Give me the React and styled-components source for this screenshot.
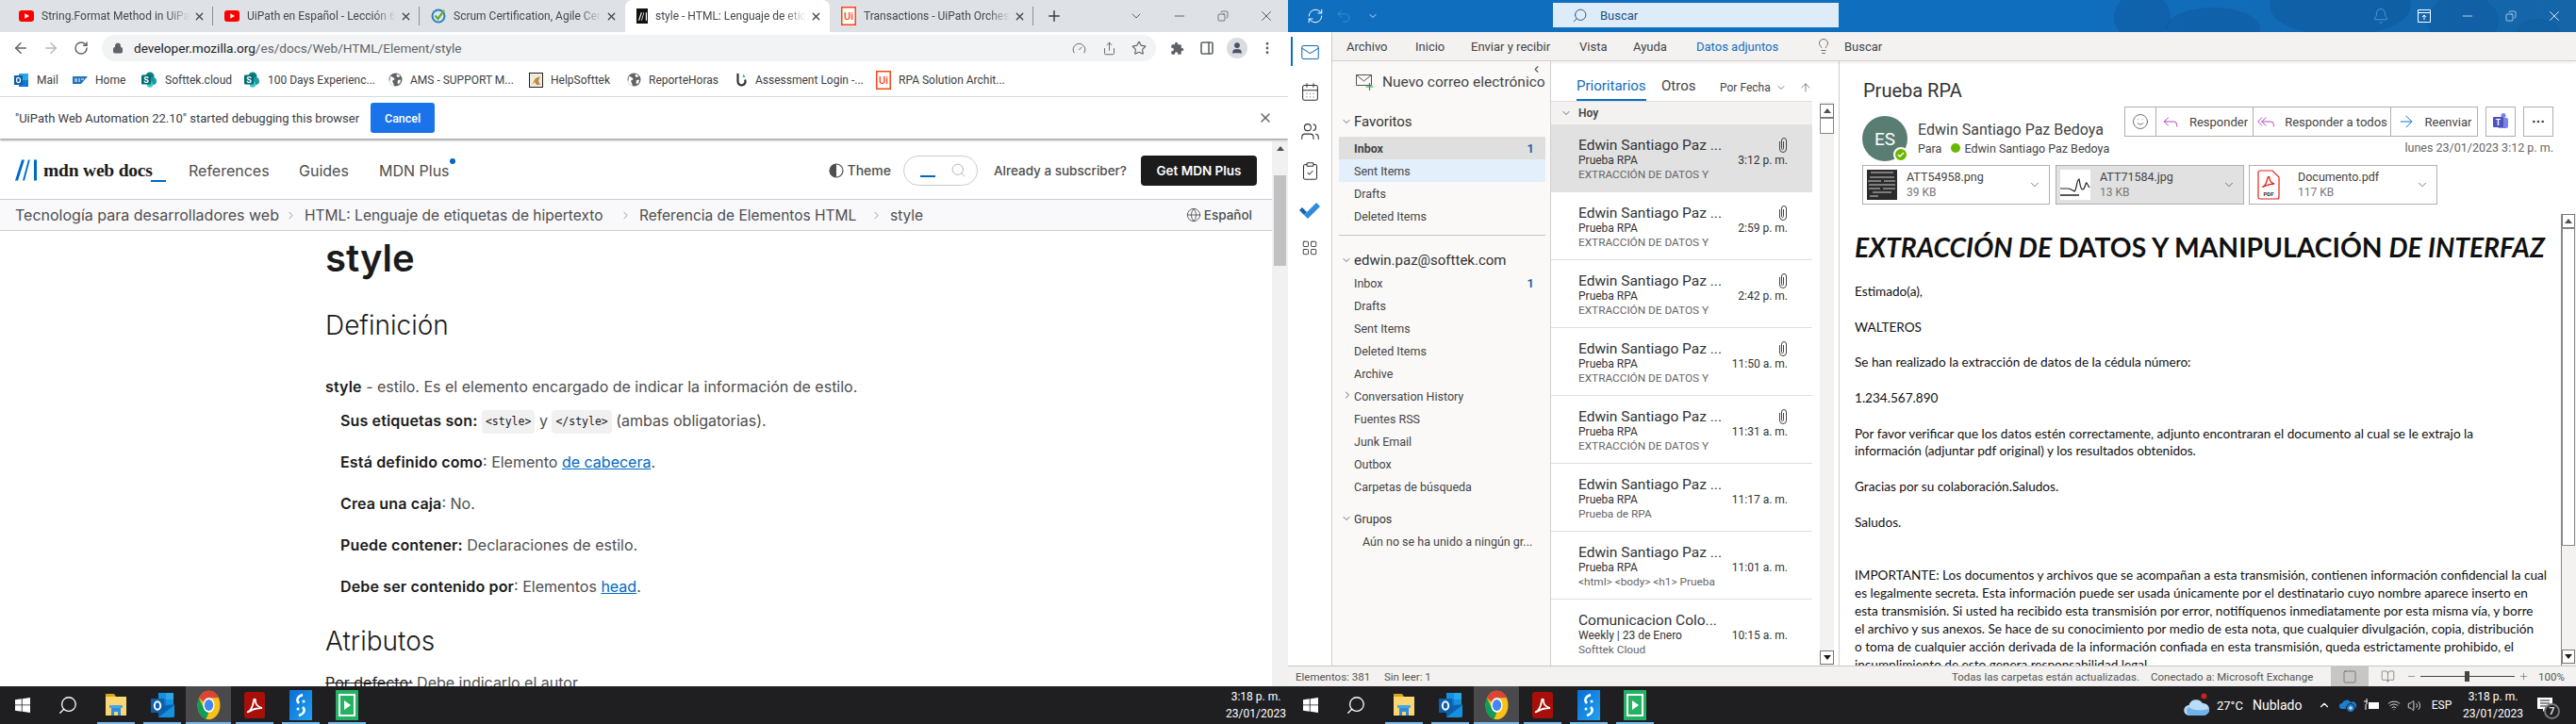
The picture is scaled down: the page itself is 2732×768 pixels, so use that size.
import React from "react";
import styled, { createGlobalStyle } from "styled-components";
import {
  ArrowLeft, ArrowRight, ArrowUp, BookOpen, ChevronDown, ChevronLeft, ChevronRight, ChevronUp,
  Copy, Globe, Lightbulb, Lock, Mail, Minus, MoreHorizontal, MoreVertical, Plus, Reply, ReplyAll,
  RotateCw, Search, Share, Smile, Square, Star, Volume2, Wifi, X, Bell, RefreshCw, Undo2, Users,
  ClipboardCheck, CalendarDays, LayoutGrid, Gauge, PanelRight, User,
} from "lucide-react";

const GlobalStyle = createGlobalStyle`
  html, body { margin: 0; padding: 0; background: #fff; overflow: hidden; }
  * { box-sizing: border-box; }
`;

const UI = `Roboto, "Open Sans", sans-serif`;
const MAIL = `Lato, "Open Sans", sans-serif`;
const MDN = `Inter, Roboto, sans-serif`;

const Screen = styled.div`
  display: flex;
  width: 2732px;
  height: 768px;
  overflow: hidden;
  font-family: ${UI};
`;

const Monitor = styled.div`
  width: 1366px;
  height: 768px;
  display: flex;
  flex-direction: column;
  flex: none;
`;

const Window = styled.div`
  flex: 1;
  min-height: 0;
  display: flex;
  flex-direction: column;
  overflow: hidden;
  background: #fff;
`;

/* ---------- Chrome ---------- */

const TabStrip = styled.div`
  height: 34px;
  flex: none;
  display: flex;
  align-items: stretch;
  padding-left: 8px;
  background: #dee1e6;
`;

const Tab = styled.div`
  width: ${(p) => p.$w}px;
  display: flex;
  align-items: center;
  padding: 0 8px 0 12px;
  position: relative;
  font-size: 12px;
  color: #44474c;
  background: ${(p) => (p.$active ? "#fff" : "transparent")};
  border-radius: ${(p) => (p.$active ? "8px 8px 0 0" : "0")};
  &::after {
    content: "";
    display: ${(p) => (p.$sep ? "block" : "none")};
    position: absolute;
    right: 0;
    top: 7px;
    bottom: 7px;
    width: 1px;
    background: #8c9095;
  }
`;

const TabTitle = styled.span`
  flex: 1;
  min-width: 0;
  margin: 0 4px 0 8px;
  white-space: nowrap;
  overflow: hidden;
  -webkit-mask-image: linear-gradient(90deg, #000 85%, transparent);
  mask-image: linear-gradient(90deg, #000 85%, transparent);
`;

const NewTab = styled.div`
  width: 28px;
  margin-left: 8px;
  display: flex;
  align-items: center;
  justify-content: center;
  color: #3c4043;
`;

const WinControls = styled.div`
  margin-left: auto;
  display: flex;
`;

const WinButton = styled.div`
  width: 46px;
  display: flex;
  align-items: center;
  justify-content: center;
  color: ${(p) => p.$color || "#3c4043"};
`;

const Toolbar = styled.div`
  height: 34px;
  flex: none;
  display: flex;
  align-items: center;
  padding-left: 6px;
  color: #5f6368;
`;

const ToolButton = styled.div`
  width: 32px;
  height: 28px;
  display: flex;
  align-items: center;
  justify-content: center;
  color: ${(p) => p.$color || "#5f6368"};
`;

const Omnibox = styled.div`
  width: 1118px;
  height: 28px;
  margin: 0 6px;
  padding: 0 2px 0 11px;
  display: flex;
  align-items: center;
  border-radius: 14px;
  background: #f1f3f4;
`;

const Url = styled.div`
  flex: 1;
  margin-left: 11px;
  font-size: 13.6px;
  color: #5f6368;
  b { font-weight: 400; color: #202124; }
`;

const Avatar = styled.div`
  width: 22px;
  height: 22px;
  border-radius: 50%;
  background: #dadce0;
  color: #44546a;
  display: flex;
  align-items: center;
  justify-content: center;
`;

const Bookmarks = styled.div`
  height: 35px;
  flex: none;
  display: flex;
  align-items: center;
  padding: 0 0 1px 15px;
  border-bottom: 1px solid #d8dadd;
`;

const Bookmark = styled.div`
  width: ${(p) => p.$w}px;
  flex: none;
  display: flex;
  align-items: center;
  gap: 8px;
  font-size: 12px;
  color: #3c4043;
  white-space: nowrap;
`;

const Infobar = styled.div`
  height: 44px;
  flex: none;
  display: flex;
  align-items: center;
  padding: 0 16px;
  font-size: 13px;
  color: #3c4043;
  box-shadow: 0 2px 2px rgba(0, 0, 0, 0.35);
  position: relative;
`;

const CancelButton = styled.div`
  width: 68px;
  height: 32px;
  margin-left: 12px;
  display: flex;
  align-items: center;
  justify-content: center;
  border-radius: 3px;
  background: #1a73e8;
  color: #fff;
  font-size: 12.5px;
  font-weight: 500;
`;

const InfoClose = styled.div`
  margin-left: auto;
  display: flex;
  color: #5f6368;
`;

const PageArea = styled.div`
  flex: 1;
  min-height: 0;
  display: flex;
  margin-top: 3px;
`;

const MdnPage = styled.div`
  flex: 1;
  min-width: 0;
  overflow: hidden;
  font-family: ${MDN};
  color: #1b1b1b;
`;

const MdnHeader = styled.div`
  height: 62px;
  display: flex;
  align-items: center;
  padding: 0 16px;
  border-bottom: 1px solid #cdcdcd;
`;

const LogoText = styled.span`
  width: 112px;
  flex: none;
  margin-left: 7px;
  font-family: "Liberation Serif", serif;
  font-weight: 700;
  font-size: 19.5px;
  letter-spacing: -0.2px;
  color: #1b1b1b;
  white-space: nowrap;
`;

const LogoCursor = styled.span`
  width: 16px;
  height: 2px;
  margin: 22px 0 0 2px;
  background: #0069c2;
  flex: none;
`;

const NavLink = styled.span`
  width: ${(p) => p.$w}px;
  flex: none;
  font-size: 16px;
  font-weight: 400;
  color: #4e4e4e;
  margin-left: ${(p) => p.$ml || 0}px;
  position: relative;
  white-space: nowrap;
`;

const PlusDot = styled.i`
  position: absolute;
  left: 75px;
  top: -3px;
  width: 6px;
  height: 6px;
  border-radius: 50%;
  background: #0069c2;
`;

const HeaderRight = styled.div`
  margin-left: auto;
  display: flex;
  align-items: center;
`;

const ThemeToggle = styled.div`
  display: flex;
  align-items: center;
  gap: 4px;
  font-size: 14px;
  font-weight: 500;
  color: #4e4e4e;
`;

const SearchPill = styled.div`
  width: 79px;
  height: 32px;
  margin-left: 13px;
  padding: 0 11px 0 17px;
  display: flex;
  align-items: center;
  justify-content: space-between;
  border: 1px solid #cdcdcd;
  border-radius: 16px;
  color: #b3b3b3;
`;

const SearchCursor = styled.span`
  width: 16px;
  height: 2px;
  margin-top: 12px;
  background: #0069c2;
`;

const Subscriber = styled.span`
  width: 140px;
  margin-left: 17px;
  font-size: 13.5px;
  font-weight: 500;
  color: #4e4e4e;
  white-space: nowrap;
`;

const PlusButton = styled.div`
  width: 123px;
  height: 32px;
  margin-left: 16px;
  display: flex;
  align-items: center;
  justify-content: center;
  border-radius: 4px;
  background: #1b1b1b;
  color: #fff;
  font-size: 13.5px;
  font-weight: 600;
`;

const Breadcrumb = styled.div`
  height: 33px;
  display: flex;
  align-items: center;
  padding: 0 21px 0 16px;
  background: #f9f9fb;
  border-bottom: 1px solid #cdcdcd;
  font-size: 15.5px;
  font-weight: 400;
  color: #4e4e4e;
  white-space: nowrap;
`;

const Crumb = styled.span`
  width: ${(p) => p.$w}px;
  flex: none;
  display: flex;
  align-items: center;
  justify-content: space-between;
  padding-right: 8px;
  font-size: ${(p) => p.$size || 15.5}px;
  color: #4e4e4e;
`;

const LangPick = styled.div`
  margin-left: auto;
  display: flex;
  align-items: center;
  gap: 3px;
  font-size: 13.5px;
  font-weight: 500;
`;

const Article = styled.div`
  padding: 5px 0 0 345px;
`;

const H1 = styled.h1`
  margin: 0;
  font-size: 40px;
  line-height: 48px;
  font-weight: 600;
  color: #1b1b1b;
`;

const H2 = styled.h2`
  margin: ${(p) => p.$mt}px 0 0;
  font-size: 28px;
  line-height: 36px;
  font-weight: 300;
  color: #1b1b1b;
`;

const Para = styled.p`
  height: 24px;
  margin: ${(p) => p.$mt}px 0 0 ${(p) => p.$indent || 0}px;
  font-size: 16px;
  line-height: 24px;
  font-weight: 400;
  color: #4e4e4e;
  white-space: nowrap;
  strong { font-weight: 600; color: #1b1b1b; letter-spacing: 0.15px; }
  a { color: #0069c2; text-decoration: underline; }
  s { color: #1b1b1b; }
`;

const Code = styled.code`
  display: inline-block;
  padding: 0 4px;
  height: 25px;
  line-height: 25px;
  vertical-align: middle;
  font-family: "DejaVu Sans Mono", "Liberation Mono", monospace;
  font-size: 11.5px;
  border-radius: 4px;
  background: #f2f1f1;
  color: #1b1b1b;
`;

const PageScroll = styled.div`
  width: 17px;
  flex: none;
  display: flex;
  flex-direction: column;
  align-items: center;
  background: #f1f1f1;
`;

const ScrollThumb = styled.div`
  width: 13px;
  height: 96px;
  margin-top: 26px;
  background: #c1c1c1;
`;

const Triangle = styled.i`
  width: 0;
  height: 0;
  margin-top: ${(p) => p.$mt || 0}px;
  border-left: 4px solid transparent;
  border-right: 4px solid transparent;
  ${(p) => (p.$down ? "border-top: 5px solid #1b1b1b;" : "border-bottom: 5px solid #505050;")}
`;

/* ---------- Taskbar ---------- */

const Taskbar = styled.div`
  height: 40px;
  flex: none;
  display: flex;
  align-items: stretch;
  background: #1f1f22;
  color: #fff;
`;

const TaskSlot = styled.div`
  width: 48px;
  flex: none;
  margin-right: ${(p) => p.$mr ?? 1}px;
  display: flex;
  align-items: center;
  justify-content: center;
  position: relative;
  background: ${(p) => (p.$active ? "#4a4a4c" : "transparent")};
  &::after {
    content: "";
    display: ${(p) => (p.$open ? "block" : "none")};
    position: absolute;
    bottom: 0;
    left: ${(p) => (p.$active ? 0 : 4)}px;
    right: ${(p) => (p.$active ? 0 : 4)}px;
    height: 2px;
    background: #76b9ed;
  }
`;

const Tray = styled.div`
  margin-left: auto;
  padding-right: ${(p) => p.$pr || 0}px;
  display: flex;
  align-items: center;
`;

const Clock = styled.div`
  width: 68px;
  text-align: center;
  font-size: 12px;
  line-height: 18px;
  color: #fff;
  white-space: nowrap;
`;

const TrayText = styled.span`
  width: ${(p) => p.$w}px;
  flex: none;
  margin-left: ${(p) => p.$ml || 0}px;
  font-size: ${(p) => p.$size || 13}px;
  text-align: ${(p) => p.$align || "left"};
  color: #fff;
  white-space: nowrap;
`;

const TraySlot = styled.span`
  width: ${(p) => p.$w}px;
  flex: none;
  display: flex;
  justify-content: center;
  color: #fff;
`;

const NotifyBox = styled.div`
  width: 34px;
  height: 40px;
  margin-left: 4px;
  position: relative;
  display: flex;
  align-items: center;
  justify-content: center;
`;

const NotifyBadge = styled.span`
  position: absolute;
  right: 1px;
  bottom: 5px;
  width: 17px;
  height: 17px;
  border-radius: 50%;
  border: 2px solid #777;
  background: #1f1f22;
  font-size: 11px;
  font-weight: 700;
  line-height: 13px;
  text-align: center;
  color: #ddd;
`;

/* ---------- Outlook ---------- */

const TitleBar = styled.div`
  height: 34px;
  flex: none;
  position: relative;
  display: flex;
  background: linear-gradient(90deg, #106ebe 0%, #106ebe 62%, #1565a8 100%);
  color: #fff;
`;

const TitleArt = styled.svg`
  position: absolute;
  right: 0;
  top: 0;
  width: 520px;
  height: 34px;
`;

const QuickTools = styled.div`
  width: 281px;
  flex: none;
  display: flex;
  align-items: center;
  padding-left: 20px;
  gap: 12px;
  position: relative;
`;

const SearchBox = styled.div`
  width: 303px;
  height: 26px;
  margin-top: 3px;
  flex: none;
  display: flex;
  align-items: center;
  gap: 13px;
  padding-left: 20px;
  position: relative;
  background: #deecf9;
  color: #1c4f82;
  font-size: 13px;
`;

const TitleControls = styled.div`
  margin-left: auto;
  display: flex;
  position: relative;
`;

const OutlookBody = styled.div`
  flex: 1;
  min-height: 0;
  display: flex;
`;

const Rail = styled.div`
  width: 47px;
  flex: none;
  display: flex;
  flex-direction: column;
  background: #fff;
  border-right: 1px solid #d2d0ce;
`;

const RailItem = styled.div`
  height: ${(p) => p.$h || 42}px;
  display: flex;
  align-items: center;
  justify-content: center;
  position: relative;
  color: ${(p) => p.$color || "#333"};
  &::before {
    content: "";
    display: ${(p) => (p.$active ? "block" : "none")};
    position: absolute;
    left: 3px;
    top: 5px;
    bottom: 6px;
    width: 2px;
    background: #106ebe;
  }
`;

const OutlookMain = styled.div`
  flex: 1;
  min-width: 0;
  display: flex;
  flex-direction: column;
`;

const Ribbon = styled.div`
  height: 31px;
  flex: none;
  display: flex;
  align-items: center;
  padding-left: 15px;
  background: #f3f2f1;
  border-bottom: 1px solid #d2d0ce;
  box-shadow: 0 2px 3px rgba(0, 0, 0, 0.06);
  position: relative;
`;

const RibbonTab = styled.span`
  width: ${(p) => p.$w}px;
  flex: none;
  display: flex;
  align-items: center;
  font-size: 13px;
  color: ${(p) => p.$color || "#444"};
  white-space: nowrap;
`;

const Panes = styled.div`
  flex: 1;
  min-height: 0;
  display: flex;
`;

const FolderPane = styled.div`
  width: 232px;
  flex: none;
  padding-top: 7px;
  position: relative;
  background: #faf9f8;
  border-right: 1px solid #d2d0ce;
  color: #444;
`;

const CollapseTab = styled.span`
  position: absolute;
  right: 9px;
  top: 3px;
  display: flex;
  color: #555;
`;

const NewMail = styled.div`
  height: 30px;
  display: flex;
  align-items: center;
  gap: 9px;
  padding-left: 25px;
  font-size: 15.5px;
  color: #444;
  white-space: nowrap;
`;

const SectionHead = styled.div`
  height: 24px;
  margin: ${(p) => p.$mt || 0}px 0 ${(p) => p.$mb || 0}px;
  padding-left: 9px;
  display: flex;
  align-items: center;
  gap: 2px;
  font-size: ${(p) => p.$size || 15}px;
  color: #333;
  white-space: nowrap;
`;

const FolderRow = styled.div`
  height: 24px;
  margin: 0 5px 0 7px;
  padding: 0 12px 0 ${(p) => (p.$indent ? 25 : 16)}px;
  display: flex;
  align-items: center;
  justify-content: space-between;
  font-size: 12.5px;
  font-weight: ${(p) => (p.$bold ? 700 : 400)};
  color: #444;
  background: ${(p) => p.$bg || "transparent"};
  white-space: nowrap;
  em { font-style: normal; font-weight: 600; font-size: 13px; color: #1a5c9e; }
`;

const FolderChevron = styled.span`
  position: absolute;
  margin-left: -13px;
  display: flex;
`;

const FolderDivider = styled.div`
  height: 1px;
  margin: 8px 5px 0 7px;
  background: #c8c6c4;
`;

const ListPane = styled.div`
  width: 306px;
  flex: none;
  display: flex;
  flex-direction: column;
  background: #fff;
  border-right: 1px solid #d2d0ce;
`;

const ListHead = styled.div`
  width: 277px;
  height: 43px;
  flex: none;
  padding-left: 27px;
  display: flex;
  align-items: stretch;
  border-bottom: 1px solid #e1dfdd;
`;

const Pivot = styled.span`
  width: ${(p) => p.$w}px;
  flex: none;
  margin-right: ${(p) => p.$mr || 0}px;
  display: flex;
  align-items: center;
  padding-top: 11px;
  font-size: 15px;
  color: ${(p) => (p.$active ? "#106ebe" : "#444")};
  border-bottom: 2px solid ${(p) => (p.$active ? "#106ebe" : "transparent")};
  white-space: nowrap;
`;

const SortBy = styled.span`
  margin-left: 26px;
  padding-top: 13px;
  display: flex;
  align-items: center;
  gap: 5px;
  font-size: 12px;
  color: #444;
  white-space: nowrap;
`;

const ListBody = styled.div`
  flex: 1;
  min-height: 0;
  display: flex;
`;

const Items = styled.div`
  width: 277px;
  flex: none;
  overflow: hidden;
`;

const DayHead = styled.div`
  height: 24px;
  display: flex;
  align-items: center;
  gap: 7px;
  padding-left: 10px;
  background: #f3f2f1;
  font-size: 12px;
  font-weight: 600;
  color: #444;
`;

const Item = styled.div`
  height: 72px;
  padding: 13px 26px 0 29px;
  background: ${(p) => (p.$selected ? "#e1e1e1" : "#fff")};
  border-bottom: ${(p) => (p.$selected ? "none" : "1px solid #e1dfdd")};
`;

const ItemRow = styled.div`
  height: ${(p) => p.$h}px;
  display: flex;
  align-items: center;
  justify-content: space-between;
  white-space: nowrap;
`;

const ItemName = styled.span`
  font-size: 15.5px;
  color: #333;
`;

const ItemSubject = styled.span`
  font-size: 12px;
  color: #333;
`;

const ItemPreview = styled.span`
  font-size: 11.8px;
  color: #666;
`;

const VScroll = styled.div`
  width: 15px;
  flex: none;
  margin-left: ${(p) => p.$ml || 0}px;
  display: flex;
  flex-direction: column;
  justify-content: space-between;
  background: #f3f2f1;
  padding: ${(p) => p.$pad || "2px 0 1px"};
`;

const VScrollTop = styled.div`
  display: flex;
  flex-direction: column;
`;

const VArrow = styled.div`
  height: 15px;
  display: flex;
  align-items: center;
  justify-content: center;
  background: #fff;
  border: 1px solid #777;
`;

const VThumb = styled.div`
  height: ${(p) => p.$h}px;
  background: #fff;
  border: 1px solid #8a8886;
`;

const Reading = styled.div`
  flex: 1;
  min-width: 0;
  display: flex;
  flex-direction: column;
  background: #fff;
`;

const Subject = styled.div`
  margin: 18px 0 0 25px;
  height: 26px;
  line-height: 26px;
  font-size: 20px;
  color: #333;
`;

const SenderRow = styled.div`
  height: 60px;
  margin: 4px 24px 0 24px;
  display: flex;
`;

const PersonBubble = styled.div`
  width: 48px;
  height: 48px;
  margin-top: 10px;
  position: relative;
  flex: none;
  display: flex;
  align-items: center;
  justify-content: center;
  border-radius: 50%;
  background: #5a7d73;
  color: #fff;
  font-size: 19px;
`;

const Presence = styled.span`
  position: absolute;
  right: -1px;
  bottom: -1px;
  width: 16px;
  height: 16px;
  border-radius: 50%;
  background: #6bb700;
  border: 2px solid #fff;
  color: #fff;
  display: flex;
  align-items: center;
  justify-content: center;
`;

const SenderInfo = styled.div`
  margin-left: 11px;
  padding-top: 15px;
  color: #444;
  white-space: nowrap;
`;

const SenderName = styled.div`
  height: 20px;
  line-height: 20px;
  font-size: 16px;
  color: #444;
`;

const SenderTo = styled.div`
  height: 18px;
  display: flex;
  align-items: center;
  font-size: 12.5px;
  color: #444;
`;

const PresenceDot = styled.i`
  width: 10px;
  height: 10px;
  margin: 0 4px 0 10px;
  border-radius: 50%;
  background: #6bb700;
`;

const SenderActions = styled.div`
  margin-left: auto;
  display: flex;
  flex-direction: column;
  align-items: flex-end;
`;

const ActionBar = styled.div`
  height: 32px;
  display: flex;
`;

const ActionGroup = styled.div`
  display: flex;
  margin-left: ${(p) => p.$ml || 0}px;
  border: 1px solid #b3b0ad;
`;

const Action = styled.div`
  width: ${(p) => p.$w}px;
  display: flex;
  align-items: center;
  justify-content: center;
  gap: 10px;
  font-size: 13px;
  color: #444;
  border-left: ${(p) => (p.$first ? "none" : "1px solid #b3b0ad")};
  white-space: nowrap;
`;

const MailDate = styled.div`
  height: 18px;
  margin-top: 3px;
  line-height: 18px;
  font-size: 12.5px;
  color: #666;
`;

const AttachRow = styled.div`
  margin: 2px 0 0 24px;
  height: 42px;
  display: flex;
  flex: none;
`;

const Attachment = styled.div`
  width: ${(p) => p.$w}px;
  margin-right: ${(p) => p.$mr || 0}px;
  padding: 0 8px 0 4px;
  display: flex;
  align-items: center;
  border: 1px solid #b3b0ad;
  background: ${(p) => (p.$selected ? "#e1e1e1" : "#fff")};
`;

const AttachThumb = styled.div`
  width: 32px;
  height: 32px;
  flex: none;
  display: flex;
  align-items: center;
  justify-content: center;
  background: #fff;
`;

const AttachText = styled.div`
  flex: 1;
  margin-left: ${(p) => p.$ml || 10}px;
  min-width: 0;
`;

const AttachName = styled.div`
  font-size: 12.5px;
  line-height: 16px;
  color: #444;
`;

const AttachSize = styled.div`
  font-size: 12px;
  line-height: 16px;
  color: #777;
`;

const BodyRow = styled.div`
  flex: 1;
  min-height: 0;
  display: flex;
  margin-top: 10px;
`;

const BodyText = styled.div`
  flex: 1;
  min-width: 0;
  overflow: hidden;
  padding-left: 16px;
  border-right: 1px solid #8a8886;
  font-family: ${MAIL};
  color: #111;
`;

const MailTitle = styled.div`
  margin-top: 16px;
  height: 38px;
  line-height: 38px;
  font-size: 28.3px;
  font-weight: 700;
  white-space: nowrap;
  em { font-style: italic; }
`;

const MailPara = styled.p`
  margin: ${(p) => p.$mt ?? 18.85}px 0 0;
  font-size: 13.6px;
  line-height: 18.85px;
  white-space: nowrap;
`;

const StatusBar = styled.div`
  height: 22px;
  flex: none;
  display: flex;
  align-items: center;
  background: #f3f2f1;
  border-top: 1px solid #c8c6c4;
  font-size: 11.5px;
  color: #555;
  white-space: nowrap;
`;

const StatusText = styled.span`
  width: ${(p) => p.$w}px;
  flex: none;
  margin-left: ${(p) => p.$ml || 0}px;
`;

const ViewButton = styled.div`
  width: 40px;
  height: 21px;
  flex: none;
  display: flex;
  align-items: center;
  justify-content: center;
  color: #555;
  background: ${(p) => (p.$active ? "#c8c6c4" : "transparent")};
`;

const ZoomTrack = styled.div`
  width: 100px;
  height: 1px;
  flex: none;
  margin: 0 4px;
  position: relative;
  background: #444;
`;

const ZoomThumb = styled.i`
  position: absolute;
  left: 47px;
  top: -5px;
  width: 5px;
  height: 11px;
  background: #444;
`;

/* ---------- drawn icons ---------- */

const YouTubeIcon = () => (
  <svg width="16" height="12" viewBox="0 0 16 12">
    <rect width="16" height="12" rx="3" fill="#f00" />
    <path d="M6.3 3.2 11 6l-4.700 2.800z" fill="#fff" />
  </svg>
);

const ScrumIcon = () => (
  <svg width="16" height="16" viewBox="0 0 16 16">
    <circle cx="8" cy="8" r="6.500" fill="#d8e8f4" stroke="#2c7fb8" strokeWidth="2" />
    <path d="M4.500 7.500 7.500 11 14 2" fill="none" stroke="#6aa82e" strokeWidth="2.200" />
  </svg>
);

const MdnMark = ({ color = "#fff", size = 11 }) => (
  <svg width={size} height={size} viewBox="0 0 23 22" style={{ flex: "none" }}>
    <path d="M7 0h3L3 22H0zM14 0h1.800L10 22H8zM20 0h3v22h-3z" fill={color} />
  </svg>
);

const MdnFavicon = styled.span`
  width: 12px;
  height: 16px;
  flex: none;
  display: flex;
  align-items: center;
  justify-content: center;
  background: #111;
`;

const UiMark = () => (
  <svg width="16" height="20" viewBox="0 0 16 20" style={{ flex: "none" }}>
    <rect x="0.750" y="0.750" width="14.500" height="18.500" fill="#fff" stroke="#fa4616" strokeWidth="1.500" />
    <text x="8" y="14" textAnchor="middle" fontSize="11" fontFamily="Roboto, sans-serif" fontWeight="500" fill="#fa4616">Ui</text>
  </svg>
);

const OutlookMini = () => (
  <svg width="16" height="16" viewBox="0 0 16 16">
    <rect x="5" y="1" width="10" height="14" fill="#28a8ea" />
    <rect x="5" y="8" width="10" height="7" fill="#0f78d4" />
    <rect x="0" y="3" width="9" height="10" fill="#0f5fa8" />
    <ellipse cx="4.500" cy="8" rx="2" ry="2.700" fill="none" stroke="#fff" strokeWidth="1.200" />
  </svg>
);

const SapIcon = () => (
  <svg width="16" height="8" viewBox="0 0 16 8">
    <path d="M0 0h16L9 8H0z" fill="#1d74bb" />
    <path d="M2 3h3M2 5h3M6 3h2M6 5h2M9 3h3" stroke="#fff" strokeWidth="1" />
  </svg>
);

const SharePointIcon = () => (
  <svg width="17" height="17" viewBox="0 0 17 17">
    <circle cx="9" cy="5" r="4.500" fill="#038387" />
    <circle cx="12" cy="10" r="4" fill="#1a9ba1" />
    <circle cx="9" cy="13.500" r="3.200" fill="#37c6d0" />
    <rect x="0" y="3.500" width="10" height="10" rx="1" fill="#036c70" />
    <text x="5" y="11.500" textAnchor="middle" fontSize="9" fontWeight="700" fontFamily="Roboto, sans-serif" fill="#fff">S</text>
  </svg>
);

const GlobeFill = () => (
  <svg width="15" height="15" viewBox="0 0 15 15">
    <circle cx="7.500" cy="7.500" r="7" fill="#5f6368" />
    <path d="M2 4c2 0 3 1 4 2s0 2-1 2-1 2 0 3l1 3c-2 0-4-2-5-4zM9 1.500c1 1 3 1 3.500 2.500L10 5 8.500 3.500zM10 8l3-.5-.5 3-2 2-1-2z" fill="#fff" />
  </svg>
);

const HelpIcon = () => (
  <svg width="15" height="16" viewBox="0 0 15 16">
    <rect x="0.500" y="0.500" width="14" height="15" fill="#f1ece0" stroke="#222" />
    <path d="M3 13 7 6l5-2-2 5 2 4H8L6 10z" fill="#b98b3d" />
  </svg>
);

const AssessIcon = () => (
  <svg width="13" height="15" viewBox="0 0 13 15">
    <path d="M2.500 1v8.500a4 4 0 1 0 7.500-2" fill="none" stroke="#333" strokeWidth="2.200" />
    <path d="M8.500 1.500 10.500 5 7.500 5z" fill="#29a9e0" />
  </svg>
);

const WinLogo = () => (
  <svg width="16" height="16" viewBox="0 0 16 16" fill="#fff">
    <path d="M0 2.300 6.800 1.300V7.500H0zM7.600 1.200 16 0V7.500H7.600zM0 8.300H6.800V14.700L0 13.700zM7.600 8.300H16V16L7.600 14.800z" />
  </svg>
);

const FolderIcon = () => (
  <svg width="22" height="24" viewBox="0 0 22 24">
    <path d="M0 0h9l2 3v4H0z" fill="#d9a520" />
    <path d="M0 3h22v20H0z" fill="#fbd671" />
    <path d="M6 14h10v9h-3v-4H9v4H6z" fill="#2f8fdc" />
    <path d="M4 12h14v3H4z" fill="#47a5e8" />
  </svg>
);

const OutlookBig = () => (
  <svg width="25" height="29" viewBox="0 0 25 29">
    <rect x="8" y="1" width="16" height="14" fill="#1490df" />
    <rect x="16" y="1" width="8" height="7" fill="#28a8ea" />
    <rect x="8" y="8" width="8" height="7" fill="#0f78d4" />
    <path d="M8 15 25 13v12a2 2 0 0 1-2 2H8z" fill="#0a62b0" />
    <path d="M8 27 25 14v11a2 2 0 0 1-2 2z" fill="#1490df" />
    <rect x="0" y="7" width="14" height="15" rx="1" fill="#0f5fa8" />
    <ellipse cx="7" cy="14.500" rx="3.200" ry="4.200" fill="none" stroke="#fff" strokeWidth="2" />
  </svg>
);

const ChromeIcon = () => (
  <svg width="25" height="32" viewBox="0 0 24 24" preserveAspectRatio="none">
    <circle cx="12" cy="12" r="11.500" fill="#fbc116" />
    <path d="M2 6.200A11.500 11.500 0 0 1 22 6.200H12A5.800 5.800 0 0 0 6.800 9.500z" fill="#db4437" />
    <path d="M2 6.200 6.800 14.500A5.800 5.800 0 0 0 12 17.800L9 23.200A11.500 11.500 0 0 1 2 6.200z" fill="#0f9d58" />
    <circle cx="12" cy="12" r="5.800" fill="#fff" />
    <circle cx="12" cy="12" r="4.500" fill="#4285f4" />
  </svg>
);

const AcrobatIcon = () => (
  <svg width="22" height="28" viewBox="0 0 22 28">
    <rect width="22" height="28" rx="3" fill="#a80f08" />
    <path d="M4 21c3-1 5-6 6-11 0-3 2-3 2 0 0 3 3 6 7 7-4 0-9 1-12 3-2 1-4 2-3 1z" fill="none" stroke="#fff" strokeWidth="1.800" />
  </svg>
);

const SAppIcon = ({ id }) => (
  <svg width="24" height="32" viewBox="0 0 24 32">
    <defs>
      <linearGradient id={id} x1="0" x2="1" y1="0" y2="1">
        <stop offset="0" stopColor="#0a6fd6" />
        <stop offset="1" stopColor="#22a0f0" />
      </linearGradient>
    </defs>
    <rect width="24" height="32" fill={`url(#${id})`} />
    <path d="M14 5C8 7 7 11 10 14M10 27c6-2 7-6 4-9" fill="none" stroke="#fff" strokeWidth="2.500" />
    <circle cx="9" cy="20" r="1.500" fill="#fff" />
    <circle cx="15" cy="12" r="1.500" fill="#fff" />
  </svg>
);

const PlayIcon = () => (
  <svg width="24" height="32" viewBox="0 0 24 32">
    <rect width="24" height="32" fill="#23b363" />
    <rect x="3" y="4" width="18" height="24" fill="#fff" />
    <rect x="5" y="6" width="14" height="20" fill="#23b363" />
    <path d="M9 11l7 5-7 5z" fill="#fff" />
  </svg>
);

const WeatherIcon = () => (
  <svg width="28" height="26" viewBox="0 0 28 26">
    <path d="M6 24a5.500 5.500 0 0 1-.5-11A8 8 0 0 1 20 11a6.500 6.500 0 0 1 1 13z" fill="#bcdcf5" />
    <path d="M6 24a5.500 5.500 0 0 1-1-9c5 4 13 4 22 2a6.500 6.500 0 0 1-6 7z" fill="#6fb3ea" />
    <circle cx="21.500" cy="3.500" r="3" fill="#c4251f" />
  </svg>
);

const OneDriveIcon = () => (
  <svg width="18" height="16" viewBox="0 0 18 16">
    <path d="M3 12a3 3 0 0 1 0-6 5 5 0 0 1 9-1 4 4 0 0 1 4 7z" fill="#1b7fd4" />
    <circle cx="12" cy="11" r="4.500" fill="#1b7fd4" stroke="#1f1f22" />
    <path d="M10 11h4M12 9v4" stroke="#fff" />
  </svg>
);

const PowerIcon = () => (
  <svg width="16" height="14" viewBox="0 0 16 14" fill="none" stroke="#fff">
    <rect x="5.500" y="4.500" width="10" height="6" fill="#fff" />
    <path d="M0 3h4M3 0v6M2 6v6" />
  </svg>
);

const NotifyIcon = () => (
  <svg width="16" height="16" viewBox="0 0 16 16">
    <path d="M0 0h16v12H9l-3 3v-3H0z" fill="#fff" />
    <path d="M3 3h10M3 6h10M3 9h7" stroke="#1f1f22" strokeWidth="1.200" />
  </svg>
);

const Clip = () => (
  <svg width="10" height="18" viewBox="0 0 10 18" fill="none" stroke="#444" strokeWidth="1">
    <path d="M1.500 5V13a3.500 3.500 0 0 0 7 0V4a2.500 2.500 0 0 0-5 0V12.500a1 1 0 0 0 2 0V5" />
  </svg>
);

const NewMailIcon = () => (
  <svg width="19" height="18" viewBox="0 0 19 18" fill="none">
    <path d="M.5 1.500h16v11H.5zM.5 1.500 8.500 8l8-6.500" stroke="#555" />
    <path d="M14.500 10v8M10.500 14h8" stroke="#2d9c3d" strokeWidth="1.200" />
  </svg>
);

const TeamsIcon = () => (
  <svg width="16" height="20" viewBox="0 0 16 20">
    <circle cx="11" cy="3.500" r="2.500" fill="#7b83eb" />
    <rect x="5" y="6" width="11" height="11" rx="2" fill="#7b83eb" />
    <rect x="0" y="5" width="11" height="11" rx="1" fill="#4b53bc" />
    <text x="5.500" y="13.500" textAnchor="middle" fontSize="8.500" fontWeight="700" fontFamily="Roboto, sans-serif" fill="#fff">T</text>
  </svg>
);

const TodoIcon = () => (
  <svg width="22" height="18" viewBox="0 0 22 18">
    <path d="M0 9l3-3 5 5-3 3z" fill="#1b5fb0" />
    <path d="M5 14 18 1l4 4-13 13z" fill="#2e8cdc" />
  </svg>
);

const DocThumb = () => (
  <svg width="32" height="32" viewBox="0 0 32 32">
    <rect width="32" height="32" fill="#2b2b2b" />
    <path d="M4 3h24M3 8h26M1 12h14M18 12h12M2 16h28M2 20h12M17 20h13M6 24h20M3 28h9" stroke="#cfcfcf" strokeWidth="1.200" />
  </svg>
);

const SigThumb = () => (
  <svg width="32" height="32" viewBox="0 0 32 32" fill="none" stroke="#222">
    <path d="M0 20h8c3 0 5 2 7 3 3-3 2-12 5-13 1 4 1 11 4 11 2 0 3-8 4-7l3 5" strokeWidth="1.200" />
    <path d="M0 27h20" strokeWidth="1.500" />
  </svg>
);

const PdfIcon = () => (
  <svg width="24" height="32" viewBox="0 0 24 32">
    <path d="M1 3a2 2 0 0 1 2-2h13l7 7v21a2 2 0 0 1-2 2H3a2 2 0 0 1-2-2z" fill="#fff" stroke="#e8221b" strokeWidth="1.200" />
    <path d="M6 18c3-1 4-5 5-9 0-2 2-2 2 0 0 3 2 5 5 6-4 0-7 1-9 2-2 1-4 2-3 1z" fill="none" stroke="#e8221b" strokeWidth="1.300" />
    <text x="12" y="27.500" textAnchor="middle" fontSize="6" fontWeight="700" fontFamily="Roboto, sans-serif" fill="#333">PDF</text>
  </svg>
);

const ThemeIcon = () => (
  <svg width="16" height="16" viewBox="0 0 16 16">
    <circle cx="8" cy="8" r="7" fill="#fff" stroke="#4e4e4e" strokeWidth="1.200" />
    <path d="M8 1a7 7 0 0 0 0 14z" fill="#4e4e4e" />
  </svg>
);

/* ---------- data ---------- */

const tabs = [
  { title: "String.Format Method in UiPath", icon: <YouTubeIcon />, sep: true, w: 218 },
  { title: "UiPath en Español - Lección 6", icon: <YouTubeIcon />, sep: true, w: 219 },
  { title: "Scrum Certification, Agile Certification", icon: <ScrumIcon />, w: 218 },
  { title: "style - HTML: Lenguaje de etiquetas", icon: <MdnFavicon><MdnMark size={9} /></MdnFavicon>, active: true, w: 217 },
  { title: "Transactions - UiPath Orchestrator", icon: <UiMark />, sep: true, w: 216 },
];

const bookmarks = [
  { label: "Mail", icon: <OutlookMini />, w: 62 },
  { label: "Home", icon: <SapIcon />, w: 73 },
  { label: "Softtek.cloud", icon: <SharePointIcon />, w: 109 },
  { label: "100 Days Experienc...", icon: <SharePointIcon />, w: 153 },
  { label: "AMS - SUPPORT M...", icon: <GlobeFill />, w: 149 },
  { label: "HelpSofttek", icon: <HelpIcon />, w: 104 },
  { label: "ReporteHoras", icon: <GlobeFill />, w: 115 },
  { label: "Assessment Login -...", icon: <AssessIcon />, w: 149 },
  { label: "RPA Solution Archit...", icon: <UiMark />, w: 150 },
];

const ribbonTabs = [
  ["Archivo", 73], ["Inicio", 59], ["Enviar y recibir", 115], ["Vista", 57], ["Ayuda", 67],
];

const accountFolders = ["Drafts", "Sent Items", "Deleted Items", "Archive"];
const moreFolders = ["Fuentes RSS", "Junk Email", "Outbox", "Carpetas de búsqueda"];

const PREVIEW = "EXTRACCIÓN DE DATOS Y";
const messages = [
  { name: "Edwin Santiago Paz ...", subject: "Prueba RPA", time: "3:12 p. m.", preview: PREVIEW, clip: true, selected: true },
  { name: "Edwin Santiago Paz ...", subject: "Prueba RPA", time: "2:59 p. m.", preview: PREVIEW, clip: true },
  { name: "Edwin Santiago Paz ...", subject: "Prueba RPA", time: "2:42 p. m.", preview: PREVIEW, clip: true },
  { name: "Edwin Santiago Paz ...", subject: "Prueba RPA", time: "11:50 a. m.", preview: PREVIEW, clip: true },
  { name: "Edwin Santiago Paz ...", subject: "Prueba RPA", time: "11:31 a. m.", preview: PREVIEW, clip: true },
  { name: "Edwin Santiago Paz ...", subject: "Prueba RPA", time: "11:17 a. m.", preview: "Prueba de RPA" },
  { name: "Edwin Santiago Paz ...", subject: "Prueba RPA", time: "11:01 a. m.", preview: "<html> <body> <h1> Prueba" },
  { name: "Comunicacion Colo...", subject: "Weekly | 23 de Enero", time: "10:15 a. m.", preview: "Softtek Cloud" },
];

function TaskIcons({ id }) {
  return (
    <>
      <TaskSlot $mr={0}><WinLogo /></TaskSlot>
      <TaskSlot $mr={3}><Search size={22} strokeWidth={1.4} color="#fff" style={{ transform: "scaleX(-1)" }} /></TaskSlot>
      <TaskSlot $open><FolderIcon /></TaskSlot>
      <TaskSlot $open><OutlookBig /></TaskSlot>
      <TaskSlot $open $active><ChromeIcon /></TaskSlot>
      <TaskSlot $open><AcrobatIcon /></TaskSlot>
      <TaskSlot $open><SAppIcon id={id} /></TaskSlot>
      <TaskSlot $open><PlayIcon /></TaskSlot>
    </>
  );
}

function ChromeWindow() {
  return (
    <Window>
      <TabStrip>
        {tabs.map((t) => (
          <Tab key={t.title} $w={t.w} $active={t.active} $sep={t.sep}>
            {t.icon}
            <TabTitle>{t.title}</TabTitle>
            <X size={13} strokeWidth={2.2} color="#3c4043" />
          </Tab>
        ))}
        <NewTab><Plus size={18} strokeWidth={2} /></NewTab>
        <WinControls>
          <WinButton><ChevronDown size={16} strokeWidth={1.2} /></WinButton>
          <WinButton><Minus size={16} strokeWidth={1.2} /></WinButton>
          <WinButton><Copy size={12} strokeWidth={1.3} style={{ transform: "scaleX(-1)" }} /></WinButton>
          <WinButton><X size={18} strokeWidth={1.1} /></WinButton>
        </WinControls>
      </TabStrip>
      <Toolbar>
        <ToolButton><ArrowLeft size={18} /></ToolButton>
        <ToolButton $color="#b4b7bb"><ArrowRight size={18} /></ToolButton>
        <ToolButton><RotateCw size={16} strokeWidth={2.2} /></ToolButton>
        <Omnibox>
          <Lock size={12} fill="#5f6368" />
          <Url><b>developer.mozilla.org</b>/es/docs/Web/HTML/Element/style</Url>
          <ToolButton><Gauge size={15} strokeWidth={1.5} /></ToolButton>
          <ToolButton><Share size={15} strokeWidth={1.5} /></ToolButton>
          <ToolButton><Star size={16} strokeWidth={1.7} /></ToolButton>
        </Omnibox>
        <ToolButton>
          <svg width="15" height="15" viewBox="0 0 24 24" fill="#5f6368">
            <path d="M20.500 11H19V7a2 2 0 0 0-2-2h-4V3.500a2.500 2.500 0 0 0-5 0V5H4a2 2 0 0 0-2 2v3.800h1.500a2.700 2.700 0 0 1 0 5.400H2V20a2 2 0 0 0 2 2h3.800v-1.500a2.700 2.700 0 0 1 5.400 0V22H17a2 2 0 0 0 2-2v-4h1.500a2.500 2.500 0 0 0 0-5z" />
          </svg>
        </ToolButton>
        <ToolButton><PanelRight size={16} strokeWidth={2.4} /></ToolButton>
        <ToolButton><Avatar><User size={14} fill="#44546a" /></Avatar></ToolButton>
        <ToolButton><MoreVertical size={16} strokeWidth={2.4} /></ToolButton>
      </Toolbar>
      <Bookmarks>
        {bookmarks.map((b) => (
          <Bookmark key={b.label} $w={b.w}>{b.icon}<span>{b.label}</span></Bookmark>
        ))}
      </Bookmarks>
      <Infobar>
        <span>"UiPath Web Automation 22.10" started debugging this browser</span>
        <CancelButton>Cancel</CancelButton>
        <InfoClose><X size={16} strokeWidth={2} /></InfoClose>
      </Infobar>
      <PageArea>
        <MdnPage>
          <MdnHeader>
            <MdnMark color="#0069c2" size={23} />
            <LogoText>mdn web docs</LogoText>
            <LogoCursor />
            <NavLink $w={117} $ml={24}>References</NavLink>
            <NavLink $w={85}>Guides</NavLink>
            <NavLink $w={80}>MDN Plus<PlusDot /></NavLink>
            <HeaderRight>
              <ThemeToggle><ThemeIcon />Theme</ThemeToggle>
              <SearchPill><SearchCursor /><Search size={17} strokeWidth={1.3} /></SearchPill>
              <Subscriber>Already a subscriber?</Subscriber>
              <PlusButton>Get MDN Plus</PlusButton>
            </HeaderRight>
          </MdnHeader>
          <Breadcrumb>
            <Crumb $w={307} $size={16}>Tecnología para desarrolladores web<ChevronRight size={13} strokeWidth={1} /></Crumb>
            <Crumb $w={355}>HTML: Lenguaje de etiquetas de hipertexto<ChevronRight size={13} strokeWidth={1} /></Crumb>
            <Crumb $w={266}>Referencia de Elementos HTML<ChevronRight size={13} strokeWidth={1} /></Crumb>
            <span>style</span>
            <LangPick><Globe size={16} strokeWidth={1.3} />Español</LangPick>
          </Breadcrumb>
          <Article>
            <H1>style</H1>
            <H2 $mt={29}>Definición</H2>
            <Para $mt={35}><strong>style</strong> - estilo. Es el elemento encargado de indicar la información de estilo.</Para>
            <Para $mt={12} $indent={16}><strong>Sus etiquetas son:</strong> <Code>&lt;style&gt;</Code> y <Code>&lt;/style&gt;</Code> (ambas obligatorias).</Para>
            <Para $mt={20} $indent={16}><strong>Está definido como</strong>: Elemento <a>de cabecera</a>.</Para>
            <Para $mt={20} $indent={16}><strong>Crea una caja</strong>: No.</Para>
            <Para $mt={20} $indent={16}><strong>Puede contener:</strong> Declaraciones de estilo.</Para>
            <Para $mt={20} $indent={16}><strong>Debe ser contenido por</strong>: Elementos <a>head</a>.</Para>
            <H2 $mt={28}>Atributos</H2>
            <Para $mt={14}><s>Por defecto:</s> Debe indicarlo el autor.</Para>
          </Article>
        </MdnPage>
        <PageScroll>
          <Triangle $mt={5} />
          <ScrollThumb />
        </PageScroll>
      </PageArea>
    </Window>
  );
}

function OutlookWindow() {
  return (
    <Window>
      <TitleBar>
        <TitleArt viewBox="0 0 520 34">
          <ellipse cx="60" cy="18" rx="30" ry="26" fill="#0e5a9e" opacity="0.55" />
          <ellipse cx="135" cy="30" rx="50" ry="22" fill="#0e5a9e" opacity="0.55" />
          <ellipse cx="270" cy="6" rx="75" ry="32" fill="#0e5a9e" opacity="0.6" />
          <ellipse cx="400" cy="22" rx="38" ry="28" fill="#0e5a9e" opacity="0.5" />
          <ellipse cx="480" cy="34" rx="24" ry="14" fill="#0e5a9e" opacity="0.45" />
        </TitleArt>
        <QuickTools>
          <RefreshCw size={18} strokeWidth={1.3} />
          <Undo2 size={18} strokeWidth={1.2} color="#3f8fd0" />
          <ChevronDown size={12} strokeWidth={1.6} style={{ marginLeft: 4 }} />
        </QuickTools>
        <SearchBox>
          <Search size={17} strokeWidth={1.3} style={{ transform: "scaleX(-1)" }} />
          Buscar
        </SearchBox>
        <TitleControls>
          <WinButton $color="#4c9be0"><Bell size={18} strokeWidth={1.2} /></WinButton>
          <WinButton $color="#fff">
            <svg width="14" height="14" viewBox="0 0 14 14" fill="none" stroke="#fff">
              <path d="M.5.500h13v13H.500zM.5 3.500h13M7 11V6M5 8l2-2 2 2" />
            </svg>
          </WinButton>
          <WinButton $color="#fff"><Minus size={16} strokeWidth={1.1} /></WinButton>
          <WinButton $color="#fff"><Copy size={12} strokeWidth={1.2} style={{ transform: "scaleX(-1)" }} /></WinButton>
          <WinButton $color="#fff"><X size={18} strokeWidth={1.1} /></WinButton>
        </TitleControls>
      </TitleBar>
      <OutlookBody>
        <Rail>
          <RailItem $active $color="#106ebe"><Mail size={21} strokeWidth={1.2} /></RailItem>
          <RailItem><CalendarDays size={21} strokeWidth={1.2} /></RailItem>
          <RailItem><Users size={21} strokeWidth={1.2} /></RailItem>
          <RailItem><ClipboardCheck size={21} strokeWidth={1.2} /></RailItem>
          <RailItem><TodoIcon /></RailItem>
          <RailItem $h={38}><LayoutGrid size={18} strokeWidth={1.2} /></RailItem>
        </Rail>
        <OutlookMain>
          <Ribbon>
            {ribbonTabs.map(([label, w]) => <RibbonTab key={label} $w={w}>{label}</RibbonTab>)}
            <RibbonTab $w={135} $color="#106ebe">Datos adjuntos</RibbonTab>
            <RibbonTab $w={22}><Lightbulb size={18} strokeWidth={1} style={{ marginLeft: -9 }} /></RibbonTab>
            <RibbonTab $w={60}>Buscar</RibbonTab>
          </Ribbon>
          <Panes>
            <FolderPane>
              <CollapseTab><ChevronLeft size={11} strokeWidth={2.5} /></CollapseTab>
              <NewMail><NewMailIcon />Nuevo correo electrónico</NewMail>
              <SectionHead $mt={15} $mb={4}><ChevronDown size={12} strokeWidth={1.4} />Favoritos</SectionHead>
              <FolderRow $bold $bg="#dfdfdf">Inbox<em>1</em></FolderRow>
              <FolderRow $bg="#e3effa">Sent Items</FolderRow>
              <FolderRow>Drafts</FolderRow>
              <FolderRow>Deleted Items</FolderRow>
              <FolderDivider />
              <SectionHead $mt={14}><ChevronDown size={12} strokeWidth={1.4} />edwin.paz@softtek.com</SectionHead>
              <FolderRow>Inbox<em>1</em></FolderRow>
              {accountFolders.map((f) => <FolderRow key={f}>{f}</FolderRow>)}
              <FolderRow>
                <span>
                  <FolderChevron><ChevronRight size={12} strokeWidth={1.6} /></FolderChevron>
                  Conversation History
                </span>
              </FolderRow>
              {moreFolders.map((f) => <FolderRow key={f}>{f}</FolderRow>)}
              <SectionHead $mt={10} $size={12.5}><ChevronDown size={12} strokeWidth={1.4} />Grupos</SectionHead>
              <FolderRow $indent>Aún no se ha unido a ningún gr...</FolderRow>
            </FolderPane>
            <ListPane>
              <ListHead>
                <Pivot $w={74} $mr={16} $active>Prioritarios</Pivot>
                <Pivot $w={36}>Otros</Pivot>
                <SortBy>Por Fecha <ChevronDown size={12} strokeWidth={1.4} /><ArrowUp size={14} strokeWidth={1.1} style={{ marginLeft: 8 }} /></SortBy>
              </ListHead>
              <ListBody>
                <Items>
                  <DayHead><ChevronDown size={12} strokeWidth={1.5} />Hoy</DayHead>
                  {messages.map((m) => (
                    <Item key={m.time} $selected={m.selected}>
                      <ItemRow $h={18}>
                        <ItemName>{m.name}</ItemName>
                        {m.clip && <Clip />}
                      </ItemRow>
                      <ItemRow $h={14}>
                        <ItemSubject>{m.subject}</ItemSubject>
                        <ItemSubject>{m.time}</ItemSubject>
                      </ItemRow>
                      <ItemRow $h={16}><ItemPreview>{m.preview}</ItemPreview></ItemRow>
                    </Item>
                  ))}
                </Items>
                <VScroll $ml={8}>
                  <VScrollTop>
                    <VArrow><Triangle /></VArrow>
                    <VThumb $h={17} />
                  </VScrollTop>
                  <VArrow><Triangle $down /></VArrow>
                </VScroll>
              </ListBody>
            </ListPane>
            <Reading>
              <Subject>Prueba RPA</Subject>
              <SenderRow>
                <PersonBubble>
                  ES
                  <Presence>
                    <svg width="8" height="8" viewBox="0 0 8 8" fill="none" stroke="#fff" strokeWidth="1.400"><path d="M1 4l2 2 4-4" /></svg>
                  </Presence>
                </PersonBubble>
                <SenderInfo>
                  <SenderName>Edwin Santiago Paz Bedoya</SenderName>
                  <SenderTo>Para<PresenceDot />Edwin Santiago Paz Bedoya</SenderTo>
                </SenderInfo>
                <SenderActions>
                  <ActionBar>
                    <ActionGroup>
                      <Action $first $w={32}><Smile size={18} strokeWidth={1} /></Action>
                      <Action $w={103}><Reply size={20} strokeWidth={1.2} color="#b146c2" />Responder</Action>
                      <Action $w={146}><ReplyAll size={20} strokeWidth={1.2} color="#b146c2" />Responder a todos</Action>
                      <Action $w={92}><ArrowRight size={20} strokeWidth={1.2} color="#0078d4" />Reenviar</Action>
                    </ActionGroup>
                    <ActionGroup $ml={8}><Action $first $w={30}><TeamsIcon /></Action></ActionGroup>
                    <ActionGroup $ml={8}><Action $first $w={30}><MoreHorizontal size={16} strokeWidth={2} /></Action></ActionGroup>
                  </ActionBar>
                  <MailDate>lunes 23/01/2023 3:12 p. m.</MailDate>
                </SenderActions>
              </SenderRow>
              <AttachRow>
                <Attachment $w={199} $mr={6}>
                  <AttachThumb><DocThumb /></AttachThumb>
                  <AttachText><AttachName>ATT54958.png</AttachName><AttachSize>39 KB</AttachSize></AttachText>
                  <ChevronDown size={14} strokeWidth={1.2} color="#444" />
                </Attachment>
                <Attachment $w={200} $mr={5} $selected>
                  <AttachThumb><SigThumb /></AttachThumb>
                  <AttachText><AttachName>ATT71584.jpg</AttachName><AttachSize>13 KB</AttachSize></AttachText>
                  <ChevronDown size={14} strokeWidth={1.2} color="#444" />
                </Attachment>
                <Attachment $w={200}>
                  <AttachThumb><PdfIcon /></AttachThumb>
                  <AttachText $ml={15}><AttachName>Documento.pdf</AttachName><AttachSize>117 KB</AttachSize></AttachText>
                  <ChevronDown size={14} strokeWidth={1.2} color="#444" />
                </Attachment>
              </AttachRow>
              <BodyRow>
                <BodyText>
                  <MailTitle><em>EXTRACCIÓN DE</em> DATOS Y MANIPULACIÓN <em>DE INTERFAZ</em></MailTitle>
                  <MailPara>Estimado(a),</MailPara>
                  <MailPara>WALTEROS</MailPara>
                  <MailPara>Se han realizado la extracción de datos de la cédula número:</MailPara>
                  <MailPara>1.234.567.890</MailPara>
                  <MailPara>
                    Por favor verificar que los datos estén correctamente, adjunto encontraran el documento al cual se le extrajo la<br />
                    información (adjuntar pdf original) y los resultados obtenidos.
                  </MailPara>
                  <MailPara>Gracias por su colaboración.Saludos.</MailPara>
                  <MailPara>Saludos.</MailPara>
                  <MailPara $mt={37.7}>
                    IMPORTANTE: Los documentos y archivos que se acompañan a esta transmisión, contienen información confidencial la cual<br />
                    es legalmente secreta. Esta información puede ser usada únicamente por el destinatario cuyo nombre aparece inserto en<br />
                    esta transmisión. Si usted ha recibido esta transmisión por error, notifíquenos inmediatamente por esta misma vía, y borre<br />
                    el archivo y sus anexos. Se hace de su conocimiento por medio de esta nota, que cualquier divulgación, copia, distribución<br />
                    o toma de cualquier acción derivada de la información confiada en esta transmisión, queda estrictamente prohibido, el<br />
                    incumplimiento de esto genera responsabilidad legal.
                  </MailPara>
                </BodyText>
                <VScroll $pad="0 1px 2px 0">
                  <VScrollTop>
                    <VArrow><Triangle /></VArrow>
                    <VThumb $h={337} />
                  </VScrollTop>
                  <VArrow><Triangle $down /></VArrow>
                </VScroll>
              </BodyRow>
            </Reading>
          </Panes>
        </OutlookMain>
      </OutlookBody>
      <StatusBar>
        <StatusText $w={94} $ml={8}>Elementos: 381</StatusText>
        <StatusText $w={602}>Sin leer: 1</StatusText>
        <StatusText $w={211}>Todas las carpetas están actualizadas.</StatusText>
        <StatusText $w={191}>Conectado a: Microsoft Exchange</StatusText>
        <ViewButton $active><Square size={16} strokeWidth={1} /></ViewButton>
        <ViewButton><BookOpen size={15} strokeWidth={1} /></ViewButton>
        <Minus size={11} strokeWidth={1.2} />
        <ZoomTrack><ZoomThumb /></ZoomTrack>
        <Plus size={11} strokeWidth={1.2} />
        <StatusText $w={34} $ml={10}>100%</StatusText>
      </StatusBar>
    </Window>
  );
}

export default function App() {
  return (
    <Screen>
      <GlobalStyle />
      <Monitor>
        <ChromeWindow />
        <Taskbar>
          <TaskIcons id="sapp-left" />
          <Tray>
            <Clock>3:18 p. m.<br />23/01/2023</Clock>
          </Tray>
        </Taskbar>
      </Monitor>
      <Monitor>
        <OutlookWindow />
        <Taskbar>
          <TaskIcons id="sapp-right" />
          <Tray $pr={16}>
            <WeatherIcon />
            <TrayText $w={38} $ml={7}>27°C</TrayText>
            <TrayText $w={64} $size={14}>Nublado</TrayText>
            <TraySlot $w={24}><ChevronUp size={14} /></TraySlot>
            <TraySlot $w={26}><OneDriveIcon /></TraySlot>
            <TraySlot $w={24}><PowerIcon /></TraySlot>
            <TraySlot $w={24}><Wifi size={14} strokeWidth={1.4} /></TraySlot>
            <TraySlot $w={18}><Volume2 size={15} strokeWidth={1.3} /></TraySlot>
            <TrayText $w={41} $size={12} $align="center">ESP</TrayText>
            <Clock>3:18 p. m.<br />23/01/2023</Clock>
            <NotifyBox><NotifyIcon /><NotifyBadge>7</NotifyBadge></NotifyBox>
          </Tray>
        </Taskbar>
      </Monitor>
    </Screen>
  );
}
